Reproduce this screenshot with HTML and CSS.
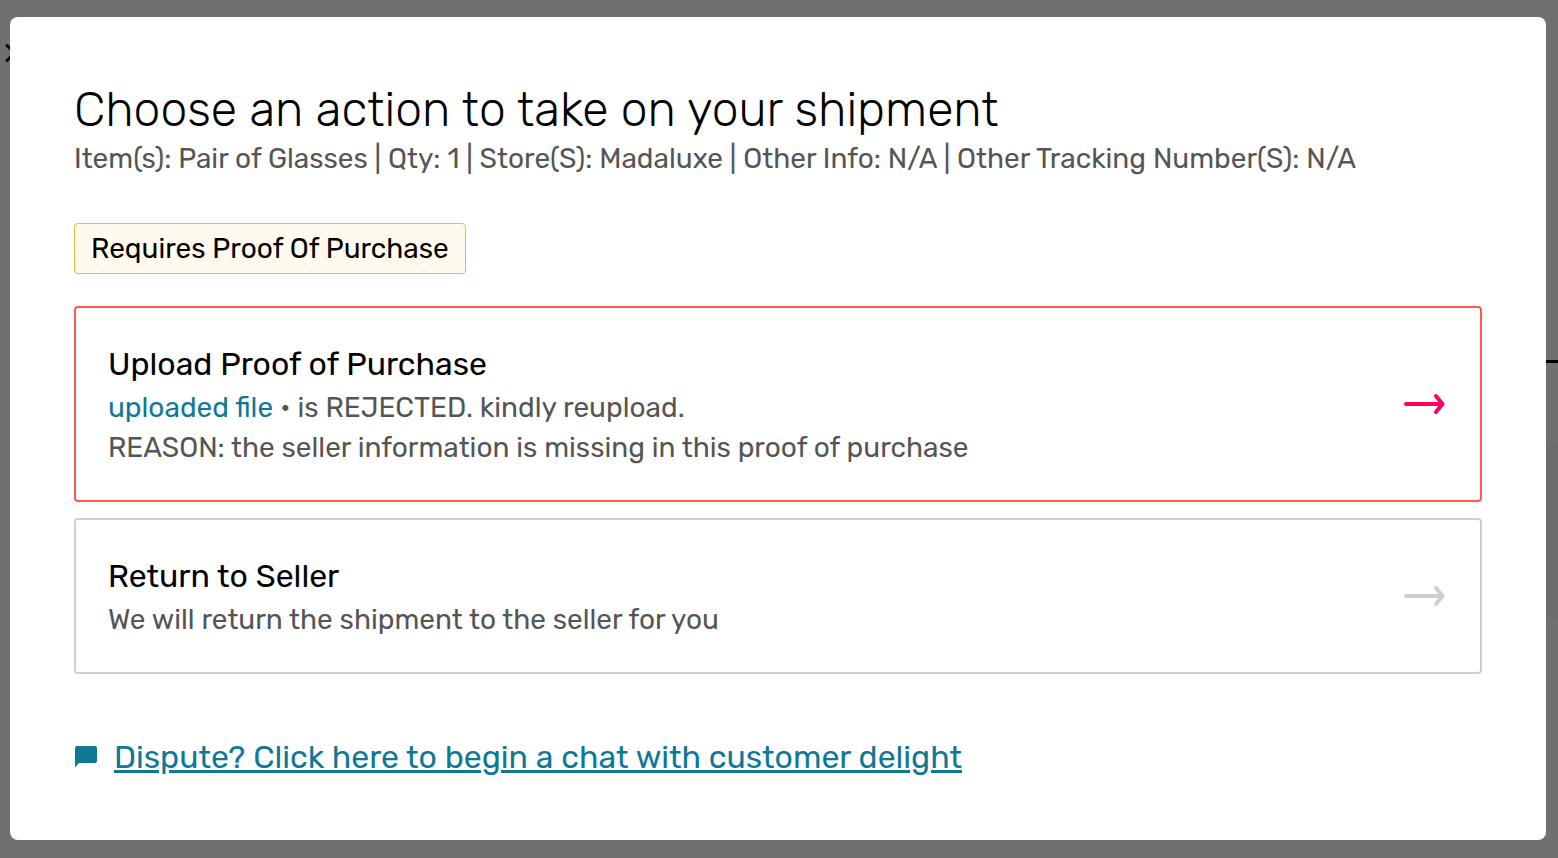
FILE: index.html
```
<!DOCTYPE html>
<html lang="en">

<head>
	<meta charset="utf-8">
	<title>Shipment Action</title>
	<link rel="stylesheet" href="styles.css">
</head>

<body>
	<!-- Page behind the modal -->
	<div class="page">
		<div class="page-header">
			<svg class="close-icon" width="20" height="20" viewBox="0 0 20 20">
				<path d="M2 2.500 L17 17.500 M17 2.500 L2 17.500" fill="none" stroke="black" stroke-width="3" stroke-linecap="round"></path>
			</svg>
		</div>
		<div class="page-content">
			<div class="page-tabs"></div>
			<div class="page-panel"></div>
		</div>
	</div>

	<div class="overlay">
		<div class="modal" role="dialog" aria-labelledby="modal-title">
			<h1 id="modal-title" class="modal-title">Choose an action to take on your shipment</h1>
			<p class="modal-details">Item(s): Pair of Glasses | Qty: 1 | Store(S): Madaluxe | Other Info: N/A | Other Tracking Number(S): N/A</p>
			<div class="badge">Requires Proof Of Purchase</div>

			<div class="action-list">
				<div class="action action-rejected">
					<div class="action-content">
						<h2 class="action-title">Upload Proof of Purchase</h2>
						<p class="action-text"><a class="file-link" href="#">uploaded file</a> • is REJECTED. kindly reupload.</p>
						<p class="action-text">REASON: the seller information is missing in this proof of purchase</p>
					</div>
					<button class="arrow-button" type="button" aria-label="Upload Proof of Purchase">
						<svg width="48" height="24" viewBox="0 0 48 24">
							<path d="M6 12 H42.500 M36 4 L42.500 12 L36 20" fill="none" stroke="currentColor" stroke-width="4" stroke-linecap="round" stroke-linejoin="round"></path>
						</svg>
					</button>
				</div>

				<div class="action">
					<div class="action-content">
						<h2 class="action-title">Return to Seller</h2>
						<p class="action-text">We will return the shipment to the seller for you</p>
					</div>
					<button class="arrow-button" type="button" aria-label="Return to Seller">
						<svg width="48" height="24" viewBox="0 0 48 24">
							<path d="M6 12 H42.500 M36 4 L42.500 12 L36 20" fill="none" stroke="currentColor" stroke-width="4" stroke-linecap="round" stroke-linejoin="round"></path>
						</svg>
					</button>
				</div>
			</div>

			<div class="dispute">
				<svg width="24" height="24" viewBox="0 0 24 24">
					<path d="M3 1 H21 Q23 1 23 3 V16 Q23 18 21 18 H5 L1 22.500 V3 Q1 1 3 1 Z" fill="currentColor"></path>
				</svg>
				<a class="dispute-link" href="#">Dispute? Click here to begin a chat with customer delight</a>
			</div>
		</div>
	</div>
</body>

</html>
```
FILE: styles.css
```
* {
	box-sizing: border-box;
}

body {
	margin: 0;
	font-family: Rubik, Inter, sans-serif;
	color: black;
	background-color: white;
}

h1, h2, p {
	margin: 0;
	font-weight: 400;
}

.page-header {
	height: 360px;
	padding: 43px 5px;
}

.close-icon {
	display: block;
}

.page-content {
	margin-left: 50%;
}

.page-tabs {
	height: 83px;
	border-top: 3px solid black;
}

.page-panel {
	height: 176px;
	background-color: #f8f8f8;
}

.overlay {
	position: fixed;
	inset: 0;
	overflow: auto;
	padding: 17px 12px 18px 10px;
	background-color: rgba(0, 0, 0, 0.56);
}

.modal {
	padding: 64px;
	border-radius: 8px;
	background-color: white;
}

.modal-title {
	font-size: 48px;
	font-weight: 300;
	line-height: 58px;
}

.modal-details {
	font-size: 28px;
	line-height: 40px;
	color: #555555;
}

.badge {
	width: fit-content;
	margin-top: 44px;
	padding: 8px 16px;
	border: 1px solid #f0b73a;
	border-radius: 4px;
	font-size: 28px;
	line-height: 33px;
	background-color: #fffaed;
}

.action-list {
	display: flex;
	flex-direction: column;
	gap: 16px;
	margin-top: 32px;
}

.action {
	display: flex;
	align-items: center;
	justify-content: space-between;
	padding: 32px;
	border: 2px solid #cecece;
	border-radius: 4px;
}

.action-title {
	font-size: 32px;
	line-height: 48px;
}

.action-text {
	font-size: 28px;
	line-height: 40px;
	color: #555555;
}

.file-link {
	color: #0f7896;
	text-decoration: none;
}

.arrow-button {
	display: flex;
	padding: 0;
	border: 0;
	color: #cecece;
	background: none;
	cursor: pointer;
}

.action-rejected {
	border-color: #ff5a52;
}

.action-rejected .arrow-button {
	color: #ff0060;
}

.dispute {
	display: flex;
	align-items: center;
	gap: 16px;
	margin-top: 64px;
	color: #0f7896;
}

.dispute-link {
	font-size: 32px;
	line-height: 38px;
	color: inherit;
}
```
